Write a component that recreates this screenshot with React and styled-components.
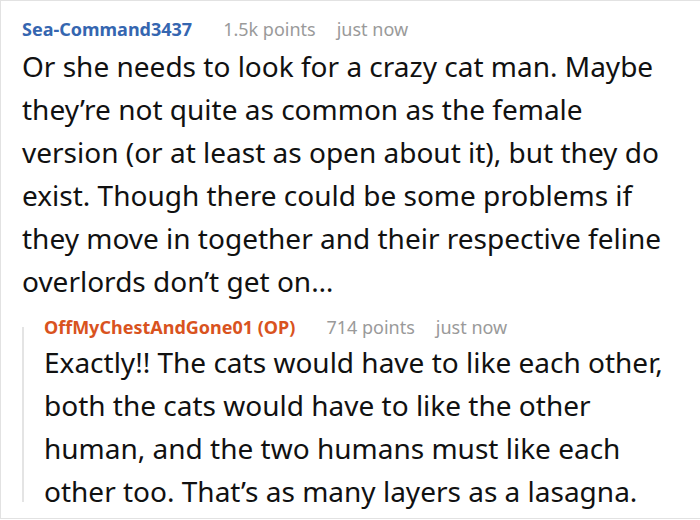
import React from 'react';
import styled, { createGlobalStyle } from 'styled-components';

const GlobalStyle = createGlobalStyle`
  * {
    box-sizing: border-box;
  }

  body {
    margin: 0;
    background: #ffffff;
    font-family: 'Noto Sans', 'Open Sans', sans-serif;
  }
`;

const Frame = styled.div`
  width: 720px;
  height: 519px;
  border: 1px solid #e2e2e2;
  border-right: none;
  padding: 16px 0 0 21px;
  overflow: hidden;
`;

const Comment = styled.div`
  display: flex;
  flex-direction: column;
`;

const Meta = styled.div`
  display: flex;
  align-items: baseline;
  gap: 21px;
  height: 24px;
  line-height: 24px;
  margin-bottom: ${(p) => p.$space}px;
  font-size: 18px;
`;

const Author = styled.span`
  margin-right: 10px;
  font-weight: 700;
  color: ${(p) => (p.$op ? '#d9531e' : '#3566b0')};
`;

const Info = styled.span`
  color: #9a9a9a;
`;

const Body = styled.p`
  margin: 0;
  width: ${(p) => p.$width}px;
  font-size: 28px;
  line-height: 43px;
  color: #111111;
`;

const Reply = styled.div`
  position: relative;
  margin-top: 12px;
  padding-left: 22px;

  &::before {
    content: '';
    position: absolute;
    left: 0;
    top: 12px;
    bottom: 11px;
    width: 2px;
    background: #e4e4e4;
  }
`;

const CommentBlock = ({ author, op, points, time, width, space, children }) => (
  <Comment>
    <Meta $space={space}>
      <Author $op={op}>{author}</Author>
      <Info>{points}</Info>
      <Info>{time}</Info>
    </Meta>
    <Body $width={width}>{children}</Body>
  </Comment>
);

export default function App() {
  return (
    <>
      <GlobalStyle />
      <Frame>
        <CommentBlock
          author="Sea-Command3437"
          points="1.5k points"
          time="just now"
          width={663}
          space={4}
        >
          Or she needs to look for a crazy cat man. Maybe they’re not quite as common
          as the female version (or at least as open about it), but they do exist.
          Though there could be some problems if they move in together and their
          respective feline overlords don’t get on…
        </CommentBlock>
        <Reply>
          <CommentBlock
            author="OffMyChestAndGone01 (OP)"
            op
            points="714 points"
            time="just now"
            width={648}
            space={2}
          >
            Exactly!! The cats would have to like each other, both the cats would
            have to like the other human, and the two humans must like each other
            too. That’s as many layers as a lasagna.
          </CommentBlock>
        </Reply>
      </Frame>
    </>
  );
}
